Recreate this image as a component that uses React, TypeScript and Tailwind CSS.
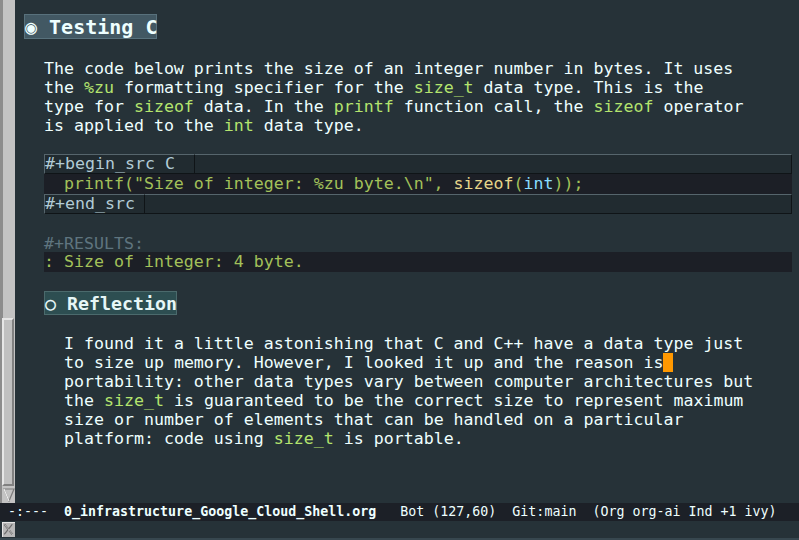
import React from "react";

const G = "text-[#b4e46e]";

function Line({ children, className = "" }: { children?: React.ReactNode; className?: string }) {
  return <div className={`h-[19px] leading-[19px] whitespace-pre ${className}`}>{children}</div>;
}

export default function App() {
  const mono = { fontFamily: '"DejaVu Sans Mono", monospace' } as React.CSSProperties;
  return (
    <div className="w-[799px] h-[540px] bg-[#263238] flex flex-col overflow-hidden text-[#eeffff]" style={mono}>
      <div className="flex h-[503px]">
        {/* scrollbar */}
        <div className="w-[15px] flex flex-col shrink-0">
          <div className="h-[318px] flex">
            <div className="w-[3px] bg-[#8c8c8c]" />
            <div className="flex-1 bg-[#c3c3c3]" />
          </div>
          <div className="h-[168px] flex">
            <div className="w-[2px] bg-[#8c8c8c]" />
            <div className="flex-1 bg-[#c0c0c0] border-t-2 border-l-2 border-t-[#e6e6e6] border-l-[#e6e6e6] border-b-2 border-r-2 border-b-[#808080] border-r-[#808080]" />
            <div className="w-[1px] bg-[#c3c3c3]" />
          </div>
          <div className="h-[17px] flex">
            <div className="w-[2px] bg-[#8c8c8c]" />
            <div className="flex-1 bg-[#c3c3c3] flex items-center justify-center">
              <svg width="12" height="15" viewBox="0 0 12 15">
                <polygon points="1,2 11,2 6,14" fill="#c3c3c3" stroke="#7a7a7a" strokeWidth="1.2" />
                <line x1="1" y1="2" x2="6" y2="14" stroke="#eeeeee" strokeWidth="1.2" />
              </svg>
            </div>
          </div>
        </div>
        {/* content */}
        <div className="flex-1 pl-[9px] pr-[7px] text-[16.6px]">
          <div className="h-[14px]" />
          <div className="h-[25px] flex">
            <div className="h-[25px] bg-[#425863] border border-[#58717c] text-[20px] font-bold leading-[24px] whitespace-pre text-[#eeffff] w-[133px]">
              ◉ Testing C
            </div>
          </div>
          <div className="h-[20px]" />
          <div className="pl-[20px]">
            <Line>The code below prints the size of an integer number in bytes. It uses</Line>
            <Line>
              the <span className={G}>%zu</span> formatting specifier for the <span className={G}>size_t</span> data type. This is the
            </Line>
            <Line>
              type for <span className={G}>sizeof</span> data. In the <span className={G}>printf</span> function call, the{" "}
              <span className={G}>sizeof</span> operator
            </Line>
            <Line>
              is applied to the <span className={G}>int</span> data type.
            </Line>
            <div className="h-[19px]" />
            {/* code block */}
            <div className="h-[20px] flex bg-[#212b30] text-[#b2cbd6]">
              <div className="w-[151px] h-[20px] border-t border-l border-t-[#56656c] border-l-[#56656c] border-b border-r border-b-[#0f1417] border-r-[#0f1417] leading-[18px] whitespace-pre">
                #+begin_src C
              </div>
              <div className="flex-1 h-[20px] border-t border-t-[#56656c] border-b border-r border-b-[#0f1417] border-r-[#0f1417]" />
            </div>
            <div className="h-[20px] leading-[20px] bg-[#1c1f26] whitespace-pre text-[#a3c15a]">
              {"  printf(\"Size of integer: %zu byte.\\n\", "}
              <span className="text-[#e6d68a]">sizeof</span>(<span className="text-[#89ddff]">int</span>));
            </div>
            <div className="h-[20px] flex bg-[#212b30] text-[#b2cbd6]">
              <div className="w-[101px] h-[20px] border-t border-l border-t-[#56656c] border-l-[#56656c] border-b border-r border-b-[#0f1417] border-r-[#0f1417] leading-[18px] whitespace-pre">
                #+end_src
              </div>
              <div className="flex-1 h-[20px] border-t border-t-[#56656c] border-b border-r border-b-[#0f1417] border-r-[#0f1417]" />
            </div>
            <div className="h-[19px]" />
            <Line className="text-[#5f757f] leading-[21px]">#+RESULTS:</Line>
            <div className="h-[20px] leading-[20px] bg-[#1c1f26] whitespace-pre text-[#a3c15a]">: Size of integer: 4 byte.</div>
            <div className="h-[19px]" />
            <div className="h-[24px] flex">
              <div className="h-[24px] w-[133px] bg-[#2d4e51] border border-[#4b6a6c] text-[18.3px] font-bold leading-[23px] whitespace-pre text-[#e6f6f6]">
                ○ Reflection
              </div>
            </div>
            <div className="h-[19px]" />
            <div className="pl-[20px]">
              <Line>I found it a little astonishing that C and C++ have a data type just</Line>
              <Line>
                to size up memory. However, I looked it up and the reason is
                <span className="inline-block w-[10px] h-[19px] align-top bg-[#ff9800]" />
              </Line>
              <Line>portability: other data types vary between computer architectures but</Line>
              <Line>
                the <span className={G}>size_t</span> is guaranteed to be the correct size to represent maximum
              </Line>
              <Line>size or number of elements that can be handled on a particular</Line>
              <Line>
                platform: code using <span className={G}>size_t</span> is portable.
              </Line>
            </div>
          </div>
        </div>
      </div>
      {/* mode line */}
      <div className="h-[18px] bg-[#1c2027] text-[13.3px] leading-[18px] whitespace-pre text-[#eeffff]">
        {" -:---  "}
        <span className="font-bold">0_infrastructure_Google_Cloud_Shell.org</span>
        {"   Bot (127,60)  Git:main  (Org org-ai Ind +1 ivy)"}
      </div>
      {/* minibuffer */}
      <div className="h-[17px] flex items-center">
        <div className="w-[2px]" />
        <svg width="13" height="15" viewBox="0 0 13 15">
          <rect x="0" y="0" width="13" height="15" fill="#b8b8b8" />
          <rect x="0" y="0" width="13" height="1" fill="#e6e6e6" />
          <rect x="0" y="0" width="1" height="15" fill="#e6e6e6" />
          <path d="M2.5 2.5 L10.5 12.5 M10.5 2.5 L2.5 12.5" stroke="#6e6e6e" strokeWidth="2" />
          <path d="M3 3 L11 13 M11 3 L3 13" stroke="#e0e0e0" strokeWidth="0.6" />
        </svg>
      </div>
      <div className="flex-1 bg-[#37474f]" />
    </div>
  );
}
